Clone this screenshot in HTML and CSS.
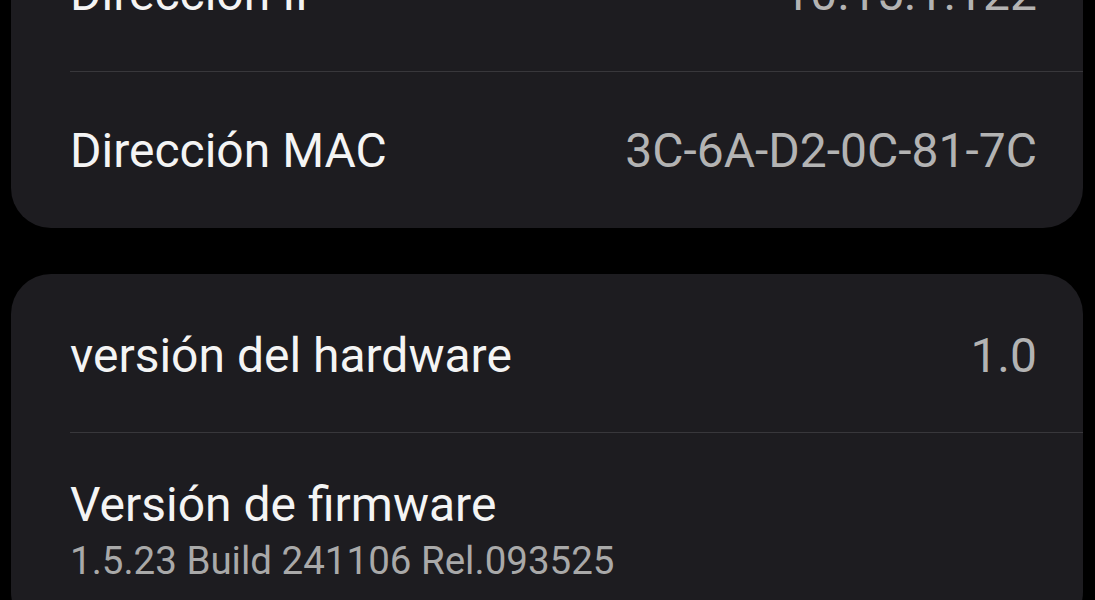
FILE: index.html
```html
<!DOCTYPE html>
<html lang="es">
<head>
<meta charset="utf-8">
<link rel="stylesheet" href="styles.css">
</head>
<body>
<div class="page">
  <section class="card">
    <div class="row">
      <span class="label">Dirección IP</span>
      <span class="value">10.15.1.122</span>
    </div>
    <div class="row">
      <span class="label">Dirección MAC</span>
      <span class="value">3C-6A-D2-0C-81-7C</span>
    </div>
  </section>
  <section class="card">
    <div class="row low">
      <span class="label">versión del hardware</span>
      <span class="value">1.0</span>
    </div>
    <div class="row stacked">
      <span class="label">Versión de firmware</span>
      <span class="sub">1.5.23 Build 241106 Rel.093525</span>
    </div>
  </section>
</div>
</body>
</html>
```

FILE: styles.css
```css
html, body {
  margin: 0;
  padding: 0;
  background: #000;
  height: 100%;
  overflow: hidden;
}
body {
  font-family: Roboto, "Noto Sans", "Liberation Sans", sans-serif;
}
.page {
  margin-top: -86px;
  padding: 0 12px 0 11px;
  display: flex;
  flex-direction: column;
  gap: 46px;
}
.card {
  background: #1d1c20;
  border-radius: 40px;
  overflow: hidden;
}
.row {
  margin-left: 59px;
  padding-right: 46px;
  padding-top: 2px;
  min-height: 157px;
  display: flex;
  align-items: center;
  justify-content: space-between;
  box-sizing: border-box;
}
.row.low {
  padding-top: 6px;
  min-height: 158px;
}
.row + .row {
  border-top: 1px solid #38373b;
}
.label {
  font-size: 48px;
  color: #f4f4f4;
  line-height: 1.2;
}
.value {
  font-size: 48px;
  color: #b3b3b3;
  line-height: 1.2;
}
.stacked {
  flex-direction: column;
  align-items: flex-start;
  justify-content: flex-start;
  padding-top: 43px;
  min-height: 200px;
}
.sub {
  font-size: 38.5px;
  color: #a9a9a9;
  line-height: 1.2;
  margin-top: 4px;
}
```
